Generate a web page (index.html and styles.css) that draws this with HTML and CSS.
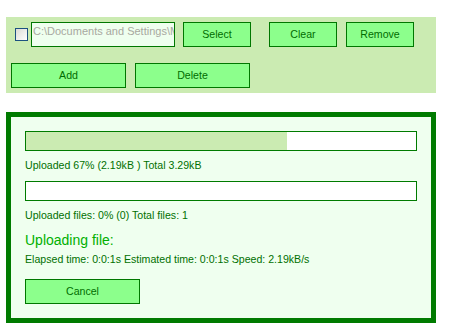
FILE: index.html
```html
<!DOCTYPE html>
<html lang="en">
<head>
    <meta charset="UTF-8">
    <title>File Upload</title>
    <link rel="stylesheet" href="styles.css">
</head>
<body>

<div class="toolbar">
    <div class="row">
        <input type="checkbox" class="check">
        <div class="path">C:\Documents and Settings\My Documents</div>
        <button class="btn btn-select">Select</button>
        <button class="btn btn-clear">Clear</button>
        <button class="btn btn-remove">Remove</button>
    </div>
    <div class="row row-second">
        <button class="btn btn-wide">Add</button>
        <button class="btn btn-wide btn-delete">Delete</button>
    </div>
</div>

<div class="progress-panel">
    <div class="bar"><div class="bar-fill" style="width:67%"></div></div>
    <p class="info first">Uploaded 67% (2.19kB ) Total 3.29kB</p>
    <div class="bar"><div class="bar-fill" style="width:0%"></div></div>
    <p class="info">Uploaded files: 0% (0) Total files: 1</p>
    <h3 class="status">Uploading file:</h3>
    <p class="info times">Elapsed time: 0:0:1s Estimated time: 0:0:1s Speed: 2.19kB/s</p>
    <button class="btn btn-wide btn-cancel">Cancel</button>
</div>

</body>
</html>
```

FILE: styles.css
```css
body {
    margin: 0;
    padding: 17px 0 0 6px;
    font-family: "Liberation Sans", Arial, sans-serif;
    font-size: 11px;
    background: #fff;
}
.toolbar {
    width: 430px;
    height: 76px;
    box-sizing: border-box;
    padding: 5px 0 0 5px;
    background: #cbebb2;
}
.row {
    display: flex;
    align-items: center;
    height: 25px;
}
.row-second {
    margin-top: 16px;
}
.check {
    width: 13px;
    height: 13px;
    margin: 0 3px 0 4px;
    appearance: none;
    border: 1px solid #1c5180;
    box-sizing: border-box;
    background: linear-gradient(135deg, #dcdcd6, #fff);
}
.path {
    width: 144px;
    height: 25px;
    box-sizing: border-box;
    border: 1px solid #007700;
    background: #efffef;
    color: #a8a8a0;
    font-size: 11px;
    line-height: 14px;
    padding: 1px 0 0 1px;
    white-space: nowrap;
    overflow: hidden;
}
.btn {
    width: 68px;
    height: 25px;
    box-sizing: border-box;
    border: 1px solid #007700;
    background: #8cff8c;
    color: #006d00;
    font-family: "Liberation Sans", Arial, sans-serif;
    font-size: 10.6px;
    padding: 0 0 1px;
}
.btn-select {
    margin-left: 8px;
}
.btn-clear {
    margin-left: 18px;
}
.btn-remove {
    margin-left: 9px;
}
.btn-wide {
    width: 115px;
}
.btn-delete {
    margin-left: 9px;
}
.progress-panel {
    width: 430px;
    height: 211px;
    box-sizing: border-box;
    margin-top: 19px;
    border: 5px solid #007b00;
    background: #efffef;
    padding: 14px 14px 0 14px;
}
.bar {
    width: 392px;
    height: 20px;
    box-sizing: border-box;
    border: 1px solid #007b00;
    background: #fff;
}
.bar-fill {
    height: 100%;
    background: #cbebb2;
}
.info {
    margin: 7px 0 9px;
    font-size: 10.6px;
    line-height: 14px;
    color: #007000;
}
.status {
    margin: 0;
    font-size: 14px;
    font-weight: normal;
    line-height: 18px;
    color: #00b000;
}
.info.times {
    margin: 3px 0 13px;
}
```
